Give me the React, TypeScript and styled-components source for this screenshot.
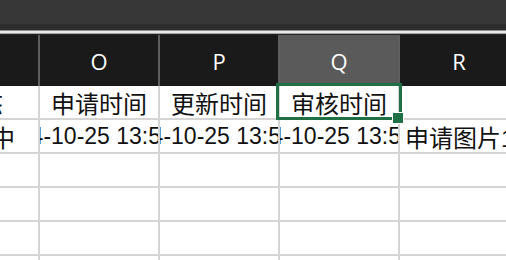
import styled, { createGlobalStyle } from 'styled-components'

const GlobalStyle = createGlobalStyle`
  html, body {
    margin: 0;
    padding: 0;
    background: #ffffff;
    overflow: hidden;
  }
  * {
    box-sizing: border-box;
  }
`

const Frame = styled.div`
  width: 506px;
  height: 260px;
  overflow: hidden;
  display: flex;
  flex-direction: column;
  font-family: 'Liberation Sans', 'Noto Sans CJK SC', sans-serif;
`

const TopBar = styled.div`
  height: 30px;
  flex: none;
  background: #373737;
  border-bottom: 6px solid #2d2d2d;
`

const Rule = styled.div`
  height: 5px;
  flex: none;
  background: linear-gradient(
    to bottom,
    #8c8c8c 0 1px,
    #e9e9e9 1px 3px,
    #a3a3a3 3px 4px,
    #262626 4px 5px
  );
`

const Sheet = styled.div`
  display: grid;
  grid-template-columns: repeat(5, 120px);
  grid-template-rows: 51px;
  grid-auto-rows: 34px;
  margin-left: -80px;
`

const HeaderCell = styled.div<{ $active?: boolean }>`
  display: flex;
  align-items: center;
  justify-content: center;
  background: ${(p) => (p.$active ? '#5a5a5a' : '#1a1a1a')};
  border-right: 2px solid #5e5e5e;
  color: #ffffff;
  font-family: 'Open Sans', 'Noto Sans', sans-serif;
  font-size: 22px;
`

const Cell = styled.div<{ $numeric?: boolean; $left?: boolean; $selected?: boolean }>`
  position: relative;
  z-index: ${(p) => (p.$selected ? 2 : 'auto')};
  display: flex;
  align-items: center;
  justify-content: ${(p) => (p.$left ? 'flex-start' : 'center')};
  padding-left: ${(p) => (p.$left ? '5px' : '0')};
  border-right: 2px solid #d5d5d5;
  border-bottom: 2px solid #d5d5d5;
  color: #111111;
  font-size: ${(p) => (p.$numeric ? '23px' : '24px')};
  white-space: nowrap;
  overflow: ${(p) => (p.$left || p.$selected ? 'visible' : 'hidden')};
`

const Selection = styled.div`
  position: absolute;
  top: -3px;
  left: -4px;
  width: 126px;
  height: 37px;
  border: 3px solid #1f7145;
  pointer-events: none;
`

const FillHandle = styled.div`
  position: absolute;
  left: 113px;
  top: 26px;
  width: 12px;
  height: 12px;
  background: #1f7145;
  border: 1px solid #ffffff;
`

const columns = ['N', 'O', 'P', 'Q', 'R']
const activeColumn = 'Q'

const titles = ['状态', '申请时间', '更新时间', '审核时间', '']
const values = ['审核中', '2024-10-25 13:55:00', '2024-10-25 13:55:00', '2024-10-25 13:55:00', '申请图片1']

export default function App() {
  return (
    <Frame>
      <GlobalStyle />
      <TopBar />
      <Rule />
      <Sheet>
        {columns.map((c) => (
          <HeaderCell key={c} $active={c === activeColumn}>
            {c}
          </HeaderCell>
        ))}

        {titles.map((t, i) => (
          <Cell key={'t' + i} $selected={columns[i] === activeColumn}>
            {t}
            {columns[i] === activeColumn && (
              <Selection>
                <FillHandle />
              </Selection>
            )}
          </Cell>
        ))}

        {values.map((v, i) => (
          <Cell key={'v' + i} $numeric={i > 0 && i < 4} $left={i === 4}>
            {v}
          </Cell>
        ))}

        {Array.from({ length: 20 }).map((_, i) => (
          <Cell key={'e' + i} />
        ))}
      </Sheet>
    </Frame>
  )
}
